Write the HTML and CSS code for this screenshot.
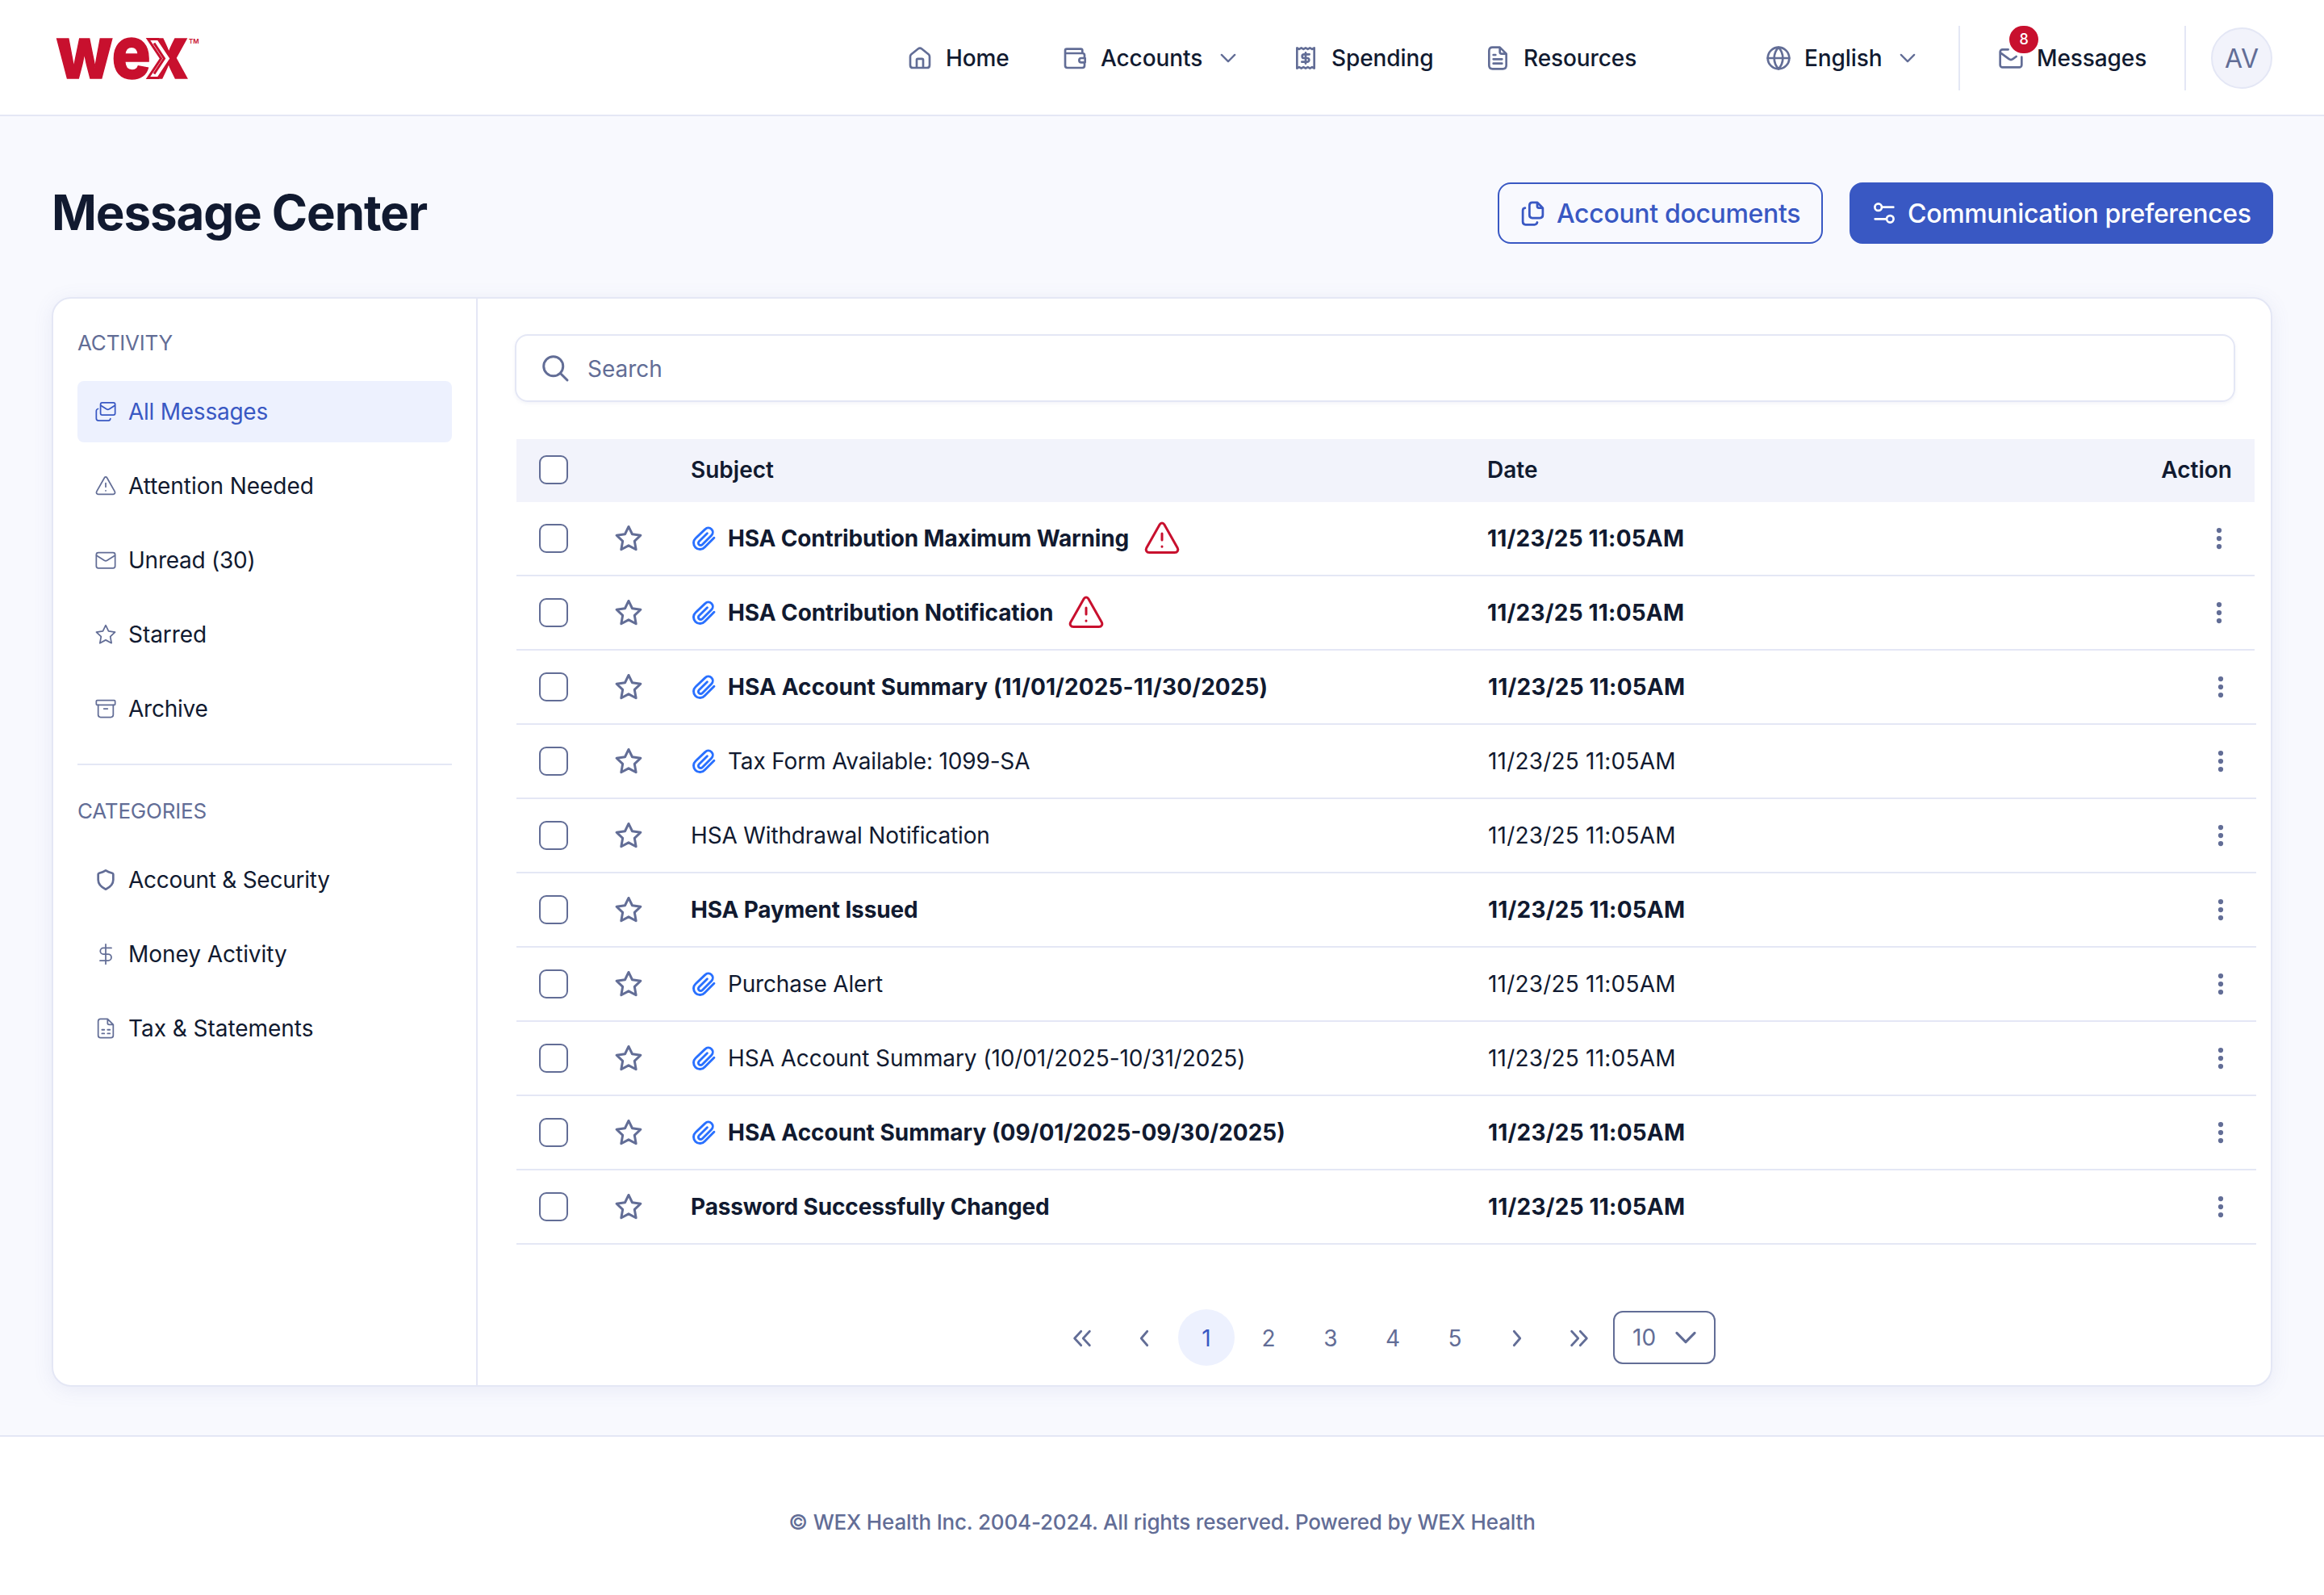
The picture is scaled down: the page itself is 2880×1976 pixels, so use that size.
FILE: index.html
```html
<!DOCTYPE html>
<html lang="en">
<head>
    <meta charset="UTF-8">
    <meta name="viewport" content="width=device-width, initial-scale=1.0">
    <link rel="stylesheet" href="styles.css">
    <title>Message Center</title>
</head>
<body>
    <!-- Icon sprite -->
    <svg class="sprite" width="0" height="0">
        <symbol id="home" viewBox="0 0 24 24"><path d="M9 21v-7.4c0-.6.4-1 1-1h4c.6 0 1 .4 1 1V21M3 10.6v7.9C3 20 4 21 5.5 21h13c1.500 0 2.500-1 2.500-2.500v-7.900c0-.9-.3-1.600-1-2.200l-6.300-5c-1-.8-2.400-.8-3.400 0L4 8.400c-.7.600-1 1.300-1 2.200z"/></symbol>
        <symbol id="wallet" viewBox="0 0 24 24"><path d="M19 7.500V5c0-1-.7-1.500-1.500-1.500H4.500C3.600 3.500 3 4.100 3 5v14c0 1.200.8 2 2 2h14c1.200 0 2-.8 2-2v-3M3.200 7.500H19c1.200 0 2 .8 2 1.800V12M21.500 12H18a2 2 0 0 0 0 4h3.500z"/></symbol>
        <symbol id="receipt" viewBox="0 0 24 24"><path d="M4 2.500v19l2-1.200 2 1.200 2-1.200 2 1.200 2-1.200 2 1.200 2-1.200 2 1.200v-19l-2 1.200-2-1.200-2 1.200-2-1.200-2 1.200-2-1.200-2 1.200z"/><path d="M15.500 8.500h-5a1.700 1.700 0 0 0 0 3.500h3a1.750 1.750 0 0 1 0 3.500h-5M12 7v10"/></symbol>
        <symbol id="file" viewBox="0 0 24 24"><path d="M14 2.300V6.400c0 .9.700 1.600 1.600 1.600h4.100M16 13H8M16 17H8M10 9H8M14 2H7.200C5.200 2 4 3.200 4 5.200v13.600c0 2 1.200 3.200 3.200 3.200h9.600c2 0 3.200-1.200 3.200-3.200V8z"/></symbol>
        <symbol id="globe" viewBox="0 0 24 24"><circle cx="12" cy="12" r="10"/><path d="M2 12h20M12 2c2.500 2.700 4 6.300 4 10s-1.500 7.300-4 10c-2.500-2.700-4-6.300-4-10s1.500-7.300 4-10z"/></symbol>
        <symbol id="chevron" viewBox="0 0 24 24"><path d="M5 8.500l7 7 7-7"/></symbol>
        <symbol id="mail" viewBox="0 0 24 24"><rect x="2" y="4" width="20" height="16.500" rx="2.200"/><path d="M2.300 7l8.200 5.300c1 .6 2 .6 3 0L21.700 7"/></symbol>
        <symbol id="mail-cut" viewBox="0 0 24 24"><path d="M9.500 4H4.200C3 4 2 5 2 6.200v12.100c0 1.200 1 2.200 2.200 2.200h15.600c1.200 0 2.200-1 2.200-2.200V11M2.300 7l8.200 6c1 .8 2 .8 3 0L17 10.500"/></symbol>
        <symbol id="mails" viewBox="0 0 24 24"><rect x="6.500" y="2.500" width="15.500" height="13" rx="1.800"/><path d="M7 5.500l5.800 3.800c1 .6 2 .6 3 0l5.700-3.800M3.800 9C2.700 9.300 2 10 2 11v8c0 1.500 1 2.500 2.500 2.500H15c1 0 1.700-.7 2-2"/></symbol>
        <symbol id="alert" viewBox="0 0 24 24"><path d="M12 9v4M12 17v.1M10.600 3.400L2.400 17.900c-.8 1.500.1 2.900 1.700 2.900h15.800c1.600 0 2.500-1.400 1.700-2.900L13.400 3.400c-.7-1.200-2.100-1.200-2.800 0z"/></symbol>
        <symbol id="star" viewBox="0 0 24 24"><path d="M12 2.300l3 6.200 6.900 1-5 4.800 1.200 6.900-6.100-3.300-6.100 3.300 1.200-6.900-5-4.800 6.900-1z"/></symbol>
        <symbol id="archive" viewBox="0 0 24 24"><rect x="2" y="3" width="20" height="5" rx="1"/><path d="M4 8v10.500C4 20 5 21 6.500 21h11c1.500 0 2.500-1 2.500-2.500V8M10 12h4"/></symbol>
        <symbol id="shield" viewBox="0 0 24 24"><path d="M20 12c0 4.600-3.800 8-8 10-4.200-2-8-5.400-8-10V6.300c0-.8.300-1.200 1-1.400 2.600-.7 4.600-1.300 7-2.900 2.400 1.600 4.400 2.200 7 2.900.7.200 1 .6 1 1.400z"/></symbol>
        <symbol id="dollar" viewBox="0 0 24 24"><path d="M18 5.500H9.500a3.250 3.250 0 0 0 0 6.500h5a3.500 3.500 0 0 1 0 7H6M12 1.500v21"/></symbol>
        <symbol id="statement" viewBox="0 0 24 24"><path d="M14 2.300V6.400c0 .9.700 1.600 1.600 1.600h4.100M8 13.500h2.500M14 13.500h2.500M8 17.500h2.500M14 17.500h2.500M14 2H6.500C5 2 4 3 4 4.500v15C4 21 5 22 6.500 22h11c1.500 0 2.500-1 2.500-2.500V8z"/></symbol>
        <symbol id="copy" viewBox="0 0 24 24"><path d="M16 2.200V5.500c0 .8.500 1.500 1.500 1.500h3.300M16 2h-4.500C9.800 2 9 3 9 4.500v9C9 15.200 10 16 11.500 16h7c1.700 0 2.500-1 2.500-2.500V7zM5 7c-1.300.1-2 1-2 2.500v10C3 21.200 4 22 5.500 22h8c1.300 0 2.200-.7 2.500-2"/></symbol>
        <symbol id="sliders" viewBox="0 0 24 24"><circle cx="6.500" cy="6.500" r="3.200"/><circle cx="17.500" cy="17.500" r="3.200"/><path d="M10 6.500h10.500M3.500 17.500H14"/></symbol>
        <symbol id="search" viewBox="0 0 24 24"><circle cx="10.500" cy="10.500" r="8"/><path d="M16.500 16.500l5.500 5.500"/></symbol>
        <symbol id="clip" viewBox="0 0 24 24"><path d="M21.700 11.500l-8.600 8.600a5.900 5.900 0 0 1-8.700.3 5.900 5.900 0 0 1 .2-8.600l8.800-8.300a4.100 4.100 0 0 1 5.900 5.700l-8.600 8.600a2.100 2.100 0 0 1-3-3l7.600-7.500"/></symbol>
        <symbol id="dots" viewBox="0 0 24 24"><circle cx="12" cy="4" r="2.500"/><circle cx="12" cy="12" r="2.500"/><circle cx="12" cy="20" r="2.500"/></symbol>
        <symbol id="left" viewBox="0 0 24 24"><path d="M15 5l-6 7 6 7"/></symbol>
        <symbol id="right" viewBox="0 0 24 24"><path d="M9 5l6 7-6 7"/></symbol>
        <symbol id="first" viewBox="0 0 24 24"><path d="M11 5l-6.500 7 6.500 7M19.500 5L13 12l6.500 7"/></symbol>
        <symbol id="last" viewBox="0 0 24 24"><path d="M4.500 5l6.500 7-6.500 7M13 5l6.500 7-6.500 7"/></symbol>
    </svg>

    <header class="header">
        <svg class="logo" width="184" height="120" viewBox="0 -35 184 120">
            <text class="logo-text" x="0" y="49.500" textLength="163" lengthAdjust="spacingAndGlyphs">wex</text>
            <path class="logo-mark" d="M113.500 1.500h12.500l16 24-16 24h-12.500l16-24z"/>
            <path class="logo-line" d="M121 6.500l12.500 19L121 44.500"/>
            <text class="logo-tm" x="164" y="7">TM</text>
        </svg>
        <nav class="nav">
            <a class="nav-item home"><svg class="icon"><use href="#home"/></svg>Home</a>
            <a class="nav-item accounts"><svg class="icon"><use href="#wallet"/></svg>Accounts<svg class="icon caret"><use href="#chevron"/></svg></a>
            <a class="nav-item spending"><svg class="icon"><use href="#receipt"/></svg>Spending</a>
            <a class="nav-item resources"><svg class="icon"><use href="#file"/></svg>Resources</a>
            <a class="nav-item language"><svg class="icon"><use href="#globe"/></svg>English<svg class="icon caret"><use href="#chevron"/></svg></a>
            <a class="nav-item messages"><svg class="icon"><use href="#mail-cut"/></svg>Messages<span class="badge">8</span></a>
            <div class="avatar">AV</div>
        </nav>
    </header>

    <main class="main">
        <div class="title-bar">
            <h1>Message Center</h1>
            <button class="btn btn-outline"><svg class="icon"><use href="#copy"/></svg>Account documents</button>
            <button class="btn btn-primary"><svg class="icon"><use href="#sliders"/></svg>Communication preferences</button>
        </div>

        <div class="card">
            <aside class="sidebar">
                <h2>ACTIVITY</h2>
                <a class="side-item active tight"><svg class="icon"><use href="#mails"/></svg>All Messages</a>
                <a class="side-item"><svg class="icon"><use href="#alert"/></svg>Attention Needed</a>
                <a class="side-item tight"><svg class="icon"><use href="#mail"/></svg>Unread (30)</a>
                <a class="side-item"><svg class="icon"><use href="#star"/></svg>Starred</a>
                <a class="side-item tight"><svg class="icon"><use href="#archive"/></svg>Archive</a>
                <hr>
                <h2>CATEGORIES</h2>
                <a class="side-item tight"><svg class="icon bold-icon"><use href="#shield"/></svg>Account &amp; Security</a>
                <a class="side-item"><svg class="icon"><use href="#dollar"/></svg>Money Activity</a>
                <a class="side-item"><svg class="icon"><use href="#statement"/></svg>Tax &amp; Statements</a>
            </aside>

            <section class="content">
                <div class="search"><svg class="icon"><use href="#search"/></svg><span>Search</span></div>

                <div class="table">
                    <div class="row head">
                        <span class="check"></span>
                        <span></span>
                        <span>Subject</span>
                        <span>Date</span>
                        <span class="action">Action</span>
                    </div>
                    <div class="row unread">
                        <span class="check"></span>
                        <svg class="icon star"><use href="#star"/></svg>
                        <span class="subject"><svg class="icon clip"><use href="#clip"/></svg>HSA Contribution Maximum Warning<svg class="icon warn"><use href="#alert"/></svg></span>
                        <span class="date">11/23/25 11:05AM</span>
                        <svg class="icon dots"><use href="#dots"/></svg>
                    </div>
                    <div class="row unread">
                        <span class="check"></span>
                        <svg class="icon star"><use href="#star"/></svg>
                        <span class="subject range"><svg class="icon clip"><use href="#clip"/></svg>HSA Contribution Notification<svg class="icon warn"><use href="#alert"/></svg></span>
                        <span class="date">11/23/25 11:05AM</span>
                        <svg class="icon dots"><use href="#dots"/></svg>
                    </div>
                    <div class="row unread">
                        <span class="check"></span>
                        <svg class="icon star"><use href="#star"/></svg>
                        <span class="subject wide"><svg class="icon clip"><use href="#clip"/></svg>HSA Account Summary (11/01/2025-11/30/2025)</span>
                        <span class="date">11/23/25 11:05AM</span>
                        <svg class="icon dots"><use href="#dots"/></svg>
                    </div>
                    <div class="row">
                        <span class="check"></span>
                        <svg class="icon star"><use href="#star"/></svg>
                        <span class="subject"><svg class="icon clip"><use href="#clip"/></svg>Tax Form Available: 1099-SA</span>
                        <span class="date">11/23/25 11:05AM</span>
                        <svg class="icon dots"><use href="#dots"/></svg>
                    </div>
                    <div class="row">
                        <span class="check"></span>
                        <svg class="icon star"><use href="#star"/></svg>
                        <span class="subject">HSA Withdrawal Notification</span>
                        <span class="date">11/23/25 11:05AM</span>
                        <svg class="icon dots"><use href="#dots"/></svg>
                    </div>
                    <div class="row unread">
                        <span class="check"></span>
                        <svg class="icon star"><use href="#star"/></svg>
                        <span class="subject">HSA Payment Issued</span>
                        <span class="date">11/23/25 11:05AM</span>
                        <svg class="icon dots"><use href="#dots"/></svg>
                    </div>
                    <div class="row">
                        <span class="check"></span>
                        <svg class="icon star"><use href="#star"/></svg>
                        <span class="subject"><svg class="icon clip"><use href="#clip"/></svg>Purchase Alert</span>
                        <span class="date">11/23/25 11:05AM</span>
                        <svg class="icon dots"><use href="#dots"/></svg>
                    </div>
                    <div class="row">
                        <span class="check"></span>
                        <svg class="icon star"><use href="#star"/></svg>
                        <span class="subject range"><svg class="icon clip"><use href="#clip"/></svg>HSA Account Summary (10/01/2025-10/31/2025)</span>
                        <span class="date">11/23/25 11:05AM</span>
                        <svg class="icon dots"><use href="#dots"/></svg>
                    </div>
                    <div class="row unread">
                        <span class="check"></span>
                        <svg class="icon star"><use href="#star"/></svg>
                        <span class="subject normal"><svg class="icon clip"><use href="#clip"/></svg>HSA Account Summary (09/01/2025-09/30/2025)</span>
                        <span class="date">11/23/25 11:05AM</span>
                        <svg class="icon dots"><use href="#dots"/></svg>
                    </div>
                    <div class="row unread">
                        <span class="check"></span>
                        <svg class="icon star"><use href="#star"/></svg>
                        <span class="subject">Password Successfully Changed</span>
                        <span class="date">11/23/25 11:05AM</span>
                        <svg class="icon dots"><use href="#dots"/></svg>
                    </div>
                </div>

                <div class="pagination">
                    <a class="page"><svg class="icon"><use href="#first"/></svg></a>
                    <a class="page"><svg class="icon"><use href="#left"/></svg></a>
                    <a class="page current">1</a>
                    <a class="page">2</a>
                    <a class="page">3</a>
                    <a class="page">4</a>
                    <a class="page">5</a>
                    <a class="page"><svg class="icon"><use href="#right"/></svg></a>
                    <a class="page"><svg class="icon"><use href="#last"/></svg></a>
                    <div class="page-size">10<svg class="icon"><use href="#chevron"/></svg></div>
                </div>
            </section>
        </div>
    </main>

    <footer class="footer">© WEX Health Inc. 2004-2024. All rights reserved. Powered by WEX Health</footer>
</body>
</html>
```

FILE: styles.css
```css
* {
    box-sizing: border-box;
}

body {
    margin: 0;
    font-family: Inter, "Liberation Sans", sans-serif;
    font-size: 28px;
    color: #111a30;
    background-color: #f8f9fe;
}

.sprite {
    position: absolute;
}

.icon {
    width: 32px;
    height: 32px;
    flex-shrink: 0;
    fill: none;
    stroke: #626d96;
    stroke-width: 2;
    stroke-linecap: round;
    stroke-linejoin: round;
}

/* Header */
.header {
    display: flex;
    align-items: center;
    justify-content: space-between;
    height: 144px;
    padding: 2px 64px 0 70px;
    background-color: #fff;
    border-bottom: 2px solid #e4e7f5;
}

.logo {
    overflow: visible;
}

.logo-text {
    font-size: 90px;
    font-weight: 800;
    fill: #c8102e;
    stroke: #c8102e;
    stroke-width: 1.5;
}

.logo-mark {
    fill: #fff;
    stroke: #c8102e;
    stroke-width: 3;
}

.logo-line {
    fill: none;
    stroke: #c8102e;
    stroke-width: 3;
}

.logo-tm {
    font-size: 8px;
    font-weight: 600;
    fill: #c8102e;
}

.nav {
    display: flex;
    align-items: center;
    font-weight: 500;
}

.nav-item {
    display: flex;
    align-items: center;
    gap: 16px;
    letter-spacing: -0.1px;
    white-space: nowrap;
}

.home {
    width: 192px;
}

.accounts {
    width: 286px;
}

.spending {
    width: 238px;
}

.resources {
    width: 348px;
}

.language {
    width: 239px;
}

.nav-item .caret {
    width: 28px;
    height: 28px;
    margin-left: 2px;
}

.messages {
    position: relative;
    width: 282px;
    height: 80px;
    padding-left: 47px;
    border-left: 2px solid #e4e7f5;
    border-right: 2px solid #e4e7f5;
}

.badge {
    position: absolute;
    top: 0;
    left: 61px;
    width: 36px;
    height: 34px;
    border-radius: 18px;
    background-color: #c8102e;
    color: #fff;
    font-size: 18px;
    line-height: 34px;
    text-align: center;
}

.avatar {
    width: 76px;
    height: 76px;
    margin-left: 31px;
    border: 2px solid #e4e7f5;
    border-radius: 50%;
    background-color: #f2f3fb;
    color: #626d96;
    font-size: 32px;
    font-weight: 400;
    line-height: 74px;
    text-align: center;
}

/* Page title and buttons */
.main {
    padding: 82px 64px 60px;
}

.title-bar {
    display: flex;
    align-items: center;
    margin: 0 -1px 66px 0;
}

h1 {
    flex: 1;
    margin: 0;
    font-size: 60px;
    font-weight: 700;
    letter-spacing: -1.1px;
    line-height: 74px;
    padding-bottom: 2px;
}

.btn {
    display: flex;
    align-items: center;
    gap: 13px;
    height: 76px;
    padding: 0 0 0 25px;
    border: 2px solid #3958c3;
    border-radius: 16px;
    font-family: inherit;
    font-size: 32px;
    font-weight: 500;
    letter-spacing: -0.33px;
    white-space: nowrap;
}

.btn-outline {
    width: 403px;
    margin-right: 33px;
    color: #3958c3;
    background-color: transparent;
}

.btn-outline .icon {
    width: 33px;
    height: 33px;
    stroke: #3958c3;
}

.btn-primary {
    width: 525px;
    color: #fff;
    background-color: #3958c3;
}

.btn-primary .icon {
    stroke: #fff;
}

/* Card */
.card {
    display: flex;
    height: 1350px;
    border: 2px solid #e4e7f5;
    border-radius: 24px;
    background-color: #fff;
    box-shadow: 0 4px 24px rgba(98, 109, 180, 0.1);
}

.sidebar {
    width: 526px;
    padding: 36px 30px 0;
    border-right: 2px solid #e4e7f5;
}

h2 {
    margin: 0 0 28px;
    font-size: 26px;
    font-weight: 400;
    letter-spacing: -0.2px;
    line-height: 38px;
    color: #626d96;
}

.side-item {
    display: flex;
    align-items: center;
    gap: 14px;
    height: 76px;
    margin-bottom: 16px;
    padding-left: 21px;
    border-radius: 8px;
    letter-spacing: -0.04px;
}

.tight {
    letter-spacing: -0.25px;
}

.side-item .icon {
    width: 28px;
    height: 28px;
    stroke-width: 1.5;
}

.side-item .bold-icon {
    stroke-width: 2.3;
}

.side-item.active {
    color: #3958c3;
    background-color: #edf1fe;
}

.side-item.active .icon {
    stroke: #3958c3;
}

hr {
    height: 2px;
    margin: 30px 0 38px;
    border: 0;
    background-color: #e4e7f5;
}

.content {
    flex: 1;
    padding: 44px 18px 0 46px;
}

.search {
    display: flex;
    align-items: center;
    gap: 22px;
    width: 2132px;
    height: 84px;
    padding-left: 30px;
    border: 2px solid #e4e7f5;
    border-radius: 16px;
    color: #626d96;
    box-shadow: 0 2px 4px rgba(98, 109, 180, 0.08);
}

.search span {
    padding-top: 2px;
}

.search .icon {
    width: 36px;
    height: 36px;
}

/* Messages table */
.table {
    margin: 46px 0 0 2px;
}

.row {
    display: grid;
    grid-template-columns: 93px 95px 988px 1fr 100px;
    align-items: center;
    height: 92px;
    padding: 0 29px 0 28px;
    border-bottom: 2px solid #e4e7f5;
}

/* header and flagged rows are slightly narrower */
.row:nth-child(-n+3) {
    grid-template-columns: 93px 95px 987px 1fr 100px;
    margin-right: 2px;
}

.row.head {
    height: 78px;
    padding: 0 28px 2px;
    border: 0;
    font-weight: 600;
    background-color: #f2f3fb;
}

.unread {
    font-weight: 700;
}

.check {
    width: 36px;
    height: 36px;
    border: 2px solid #626d96;
    border-radius: 9px;
    background-color: #fff;
}

.subject {
    display: flex;
    align-items: center;
    letter-spacing: -0.16px;
}

.subject.wide {
    letter-spacing: 0.1px;
}

.subject.normal {
    letter-spacing: 0;
}

.subject.range {
    letter-spacing: -0.09px;
}

.date {
    letter-spacing: 0.2px;
}

.star {
    width: 36px;
    height: 36px;
}

.clip {
    width: 32px;
    height: 32px;
    margin-right: 14px;
    stroke: #2970ff;
    stroke-width: 2.2;
}

.warn {
    width: 48px;
    height: 48px;
    margin-left: 17px;
    stroke: #c8102e;
    stroke-width: 1.5;
}

.action,
.dots {
    justify-self: end;
}

.dots {
    width: 30px;
    height: 30px;
    fill: #626d96;
    stroke: none;
}

/* Pagination */
.pagination {
    display: flex;
    align-items: center;
    gap: 7px;
    margin: 80px 0 0 668px;
    color: #626d96;
}

.page {
    display: flex;
    align-items: center;
    justify-content: center;
    width: 70px;
    height: 70px;
    padding-top: 1px;
    border-radius: 50%;
}

.page .icon {
    width: 30px;
    height: 30px;
    stroke-width: 2.2;
}

.page.current {
    color: #3958c3;
    background-color: #edf1fe;
}

.page-size {
    display: flex;
    align-items: center;
    gap: 18px;
    width: 127px;
    height: 66px;
    padding-left: 22px;
    border: 2px solid #626d96;
    border-radius: 12px;
}

.page-size .icon {
    width: 38px;
    height: 38px;
}

/* Footer */
.footer {
    display: flex;
    align-items: center;
    justify-content: center;
    height: 198px;
    padding-top: 15px;
    border-top: 2px solid #e4e7f5;
    background-color: #fff;
    font-size: 26px;
    font-weight: 500;
    letter-spacing: -0.18px;
    color: #626d96;
}
```
